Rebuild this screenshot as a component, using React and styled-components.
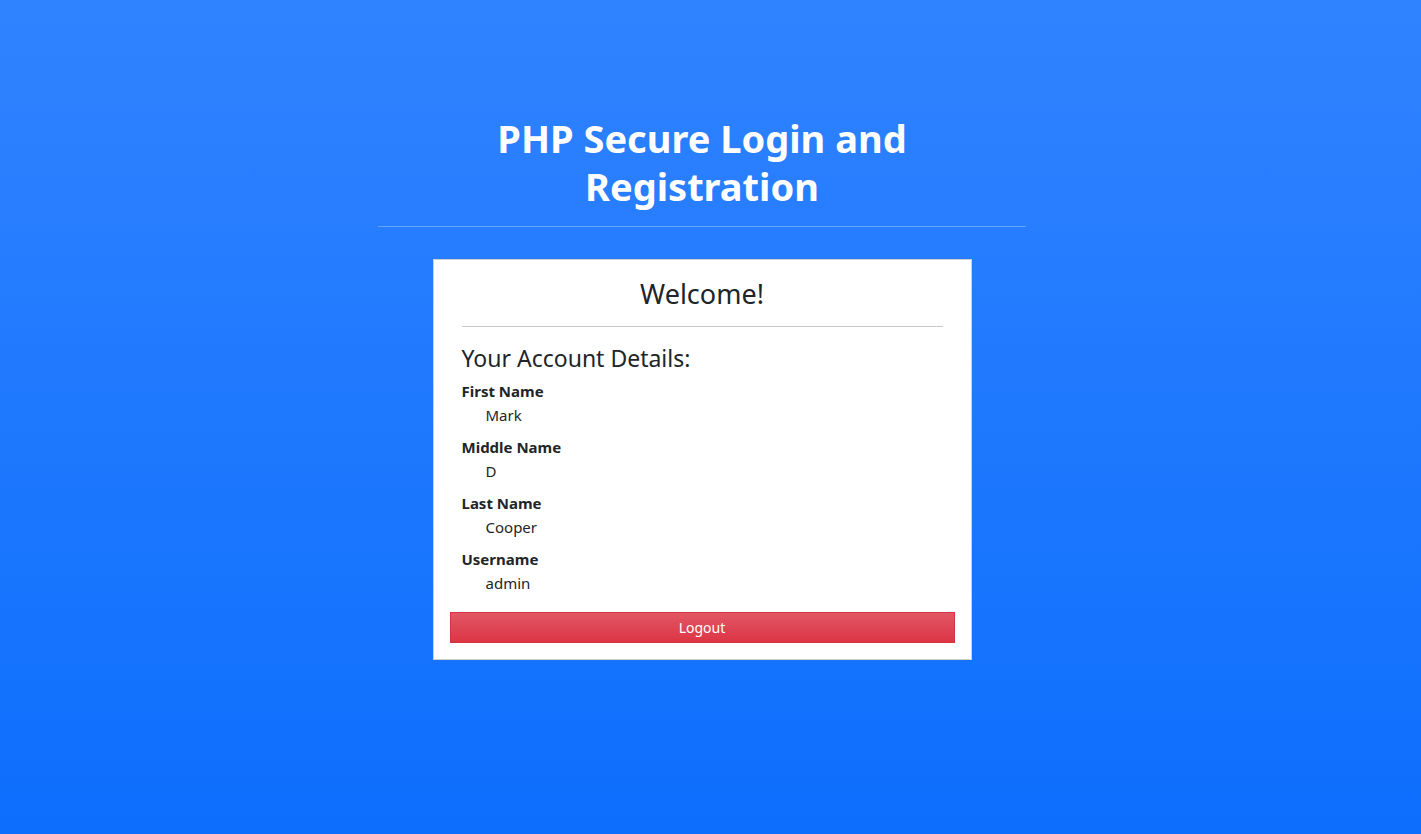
import styled, { createGlobalStyle } from 'styled-components';

const Global = createGlobalStyle`
  html, body {
    margin: 0;
    min-height: 100%;
  }
  body {
    font-family: "Noto Sans", "Open Sans", sans-serif;
    color: #212529;
    background: linear-gradient(to bottom, #3083ff 0%, #0d6efd 100%);
    min-height: 834px;
  }
`;

const Page = styled.main`
  display: flex;
  flex-direction: column;
  align-items: center;
  padding: 114px 17px 0 0;
`;

const Header = styled.header`
  width: 648px;
  border-bottom: 1px solid rgba(255, 255, 255, 0.3);
  padding-bottom: 16px;
`;

const Title = styled.h1`
  margin: 0 auto;
  width: 440px;
  text-align: center;
  color: #fff;
  font-size: 38px;
  line-height: 48px;
  font-weight: 700;
`;

const Card = styled.section`
  margin-top: 32px;
  width: 539px;
  box-sizing: border-box;
  background: #fff;
  border: 1px solid #cfcfcf;
  padding: 14px 16px 16px;
`;

const Inner = styled.div`
  padding: 0 12px;
`;

const Welcome = styled.h2`
  margin: 0;
  text-align: center;
  font-size: 27px;
  font-weight: 400;
  line-height: 40px;
  padding-bottom: 12px;
  border-bottom: 1px solid #c8c8c8;
`;

const Subtitle = styled.h3`
  margin: 15px 0 6px;
  font-size: 23px;
  font-weight: 400;
  line-height: 32px;
`;

const Details = styled.dl`
  margin: 0 0 18px;
`;

const Entry = styled.div`
  margin-bottom: 10px;
  &:last-child {
    margin-bottom: 0;
  }
`;

const Label = styled.dt`
  font-weight: 700;
  font-size: 15px;
  line-height: 22px;
`;

const Value = styled.dd`
  margin: 2px 0 0 24px;
  font-size: 15px;
  line-height: 22px;
`;

const LogoutButton = styled.button`
  display: block;
  width: 100%;
  height: 31px;
  border: 1px solid #d33441;
  background: linear-gradient(to bottom, #e25663 0%, #dc3545 100%);
  color: #fff;
  font-family: inherit;
  font-size: 14px;
  cursor: pointer;
`;

const account = [
  ['First Name', 'Mark'],
  ['Middle Name', 'D'],
  ['Last Name', 'Cooper'],
  ['Username', 'admin'],
];

export default function App() {
  return (
    <>
      <Global />
      <Page>
        <Header>
          <Title>PHP Secure Login and Registration</Title>
        </Header>
        <Card>
          <Inner>
            <Welcome>Welcome!</Welcome>
            <Subtitle>Your Account Details:</Subtitle>
            <Details>
              {account.map(([label, value]) => (
                <Entry key={label}>
                  <Label>{label}</Label>
                  <Value>{value}</Value>
                </Entry>
              ))}
            </Details>
          </Inner>
          <LogoutButton>Logout</LogoutButton>
        </Card>
      </Page>
    </>
  );
}
